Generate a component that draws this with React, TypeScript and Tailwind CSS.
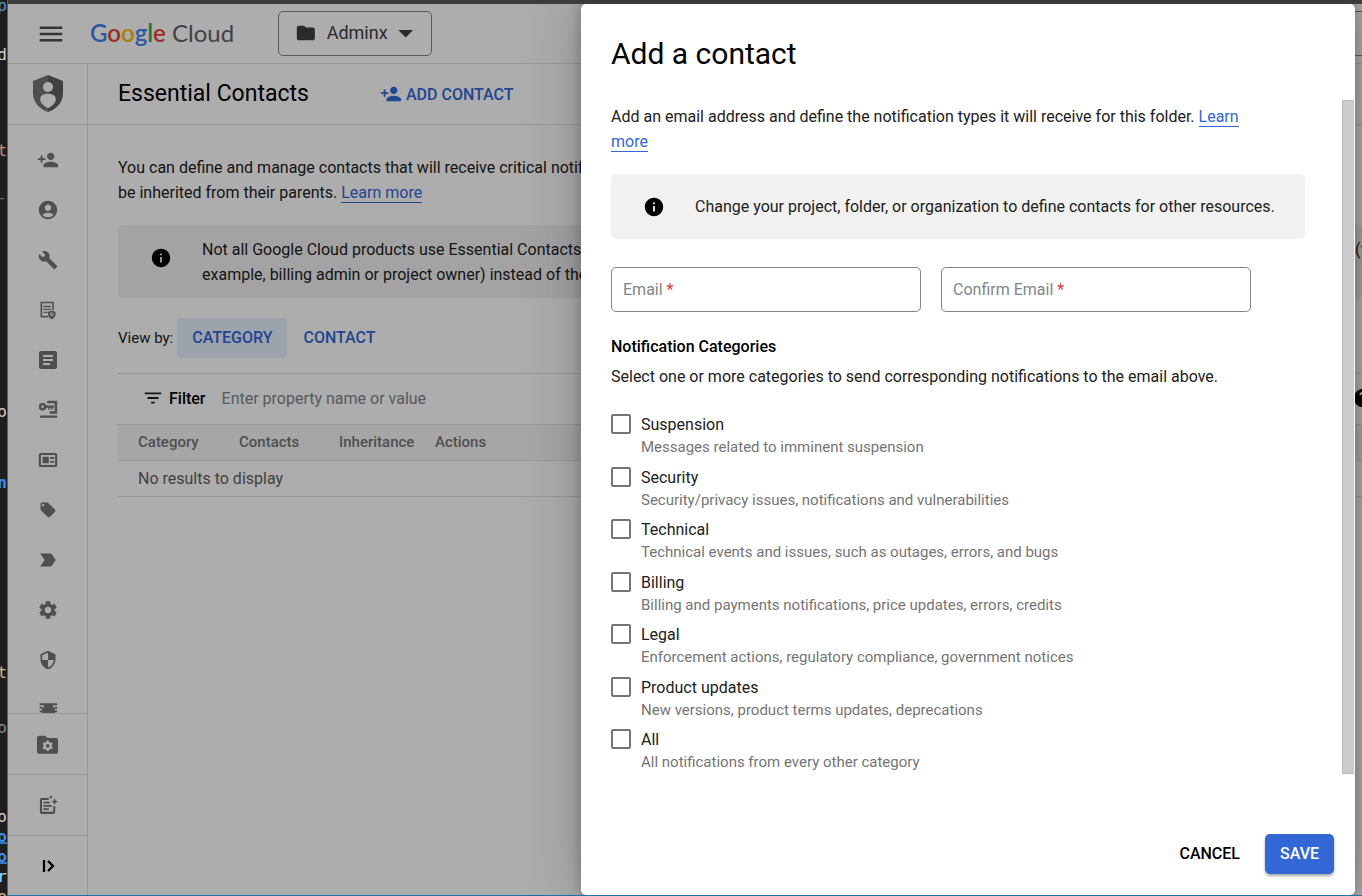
import type { ReactNode } from "react";
import {
  MdAccountCircle,
  MdArrowDropDown,
  MdArticle,
  MdBuild,
  MdFilterList,
  MdFolder,
  MdHelp,
  MdInfo,
  MdLabelImportant,
  MdLocalOffer,
  MdMenu,
  MdPersonAdd,
  MdSecurity,
  MdSettings,
} from "react-icons/md";

const svgProps = { viewBox: "0 0 24 24", fill: "currentColor", "aria-hidden": true } as const;

const ShieldPerson = () => (
  <svg viewBox="0 0 30 37" className="h-[37px] w-[30px]" aria-hidden="true">
    <path d="M15 0 0 6v12.500C0 27 6 34 15 37z" fill="#757575" />
    <path d="M15 0l15 6v12.500C30 27 24 34 15 37z" fill="#616161" />
    <circle cx="15" cy="12" r="5" fill="#fff" />
    <path d="M15 18.800c-5 0-7.800 2.200-7.800 5.500 0 3.400 3.300 6.600 7.800 9 4.500-2.400 7.800-5.600 7.800-9 0-3.300-2.800-5.500-7.800-5.500z" fill="#fff" />
  </svg>
);

const AuditDoc = () => (
  <svg {...svgProps} className="size-5">
    <path d="M3 2h16v10h-2V4H5v15h7v2H3z" />
    <path d="M6.500 7h9v1.600h-9zM6.500 10.500h9v1.600h-9zM6.500 14h5v1.600h-5z" />
    <path d="M16.500 12.500 21 14.200v3.300c0 2.600-1.900 4.700-4.500 5.500-2.600-.8-4.500-2.900-4.500-5.500v-3.300zm0 2.500a2.200 2.200 0 1 0 0 4.400 2.200 2.200 0 0 0 0-4.400z" fillRule="evenodd" />
    <circle cx="16.500" cy="17.200" r="1.100" />
  </svg>
);

const KeyTable = () => (
  <svg {...svgProps} className="size-5">
    <path d="M11 1h12v15.500h-9v-3h6V4h-9z" />
    <path d="M5.500 3.500a4.500 4.500 0 1 1-.01 9 4.500 4.500 0 0 1 .01-9zm0 2.900a1.600 1.600 0 1 0 0 3.200 1.600 1.600 0 0 0 0-3.200z" fillRule="evenodd" />
    <path d="M9 6.700h10v2.600h-1.200v2.200h-2V9.300h-1.300v2.200h-2V9.300H9zM2.500 18.500H23v2.800H2.500z" />
  </svg>
);

const IdCard = () => (
  <svg {...svgProps} className="size-5">
    <path d="M3.500 3.500h17c1.400 0 2.500.9 2.500 2v13c0 1.100-1.100 2-2.500 2h-17c-1.400 0-2.500-.9-2.500-2v-13c0-1.100 1.100-2 2.500-2zM3.500 6v12h17V6z" fillRule="evenodd" />
    <path d="M5.500 8h7.500v8H5.500zM14.500 8.500h5v2.200h-5zM14.500 13.200h5v2.200h-5z" />
  </svg>
);

const QuotaStrip = () => (
  <svg {...svgProps} className="size-[22px]">
    <path d="M3 4.500h19v2.300H3zM3 8.500h3v2H3zM19 8.500h3v2h-3zM7.500 6.500h10v12h-10zM3 12.500h3v2H3zM19 12.500h3v2h-3zM3 18h19v2.300H3z" />
    <path d="M5.500 9.500h14v6h-14z" />
  </svg>
);

const FolderGear = () => (
  <svg {...svgProps} className="size-[21px]">
    <path
      fillRule="evenodd"
      d="M2 2h7.500l2.500 2.500h10a2 2 0 0 1 2 2V20.500a2 2 0 0 1-2 2H2a2 2 0 0 1-2-2V4a2 2 0 0 1 2-2zM11 7.500l-.4 1.700-1.300.7-1.700-.6-1.300 2.200 1.300 1.200v1.500l-1.300 1.200 1.300 2.200 1.700-.5 1.300.7.400 1.700h2.400l.4-1.700 1.300-.7 1.700.5 1.300-2.200-1.300-1.200v-1.500l1.300-1.200-1.300-2.200-1.700.6-1.300-.7-.4-1.700zm1.200 3.900a2.100 2.100 0 1 1 0 4.200 2.100 2.100 0 0 1 0-4.200z"
    />
  </svg>
);

const ReleaseNotes = () => (
  <svg {...svgProps} className="size-5">
    <path d="M4.500 3.500H13v2.400H4.800v14.300h13.400v-6.700h2.500v7a2.300 2.300 0 0 1-2.200 2.300h-14a2.300 2.300 0 0 1-2.200-2.300V5.800a2.300 2.300 0 0 1 2.200-2.300z" />
    <path d="M6.500 8H14v2.100H6.500zM6.500 12h10v2.100h-10zM6.500 16H13v2.100H6.500z" />
    <path d="m20 4 1.300 2.900L24 8l-2.700 1.100L20 12l-1.300-2.900L16 8l2.700-1.100zM15.500 0l.8 1.800 1.700.7-1.700.7-.8 1.800-.8-1.800-1.700-.7 1.700-.7z" />
  </svg>
);

const ExpandPanel = () => (
  <svg viewBox="0 0 14 14" className="size-[14px]" fill="none" stroke="#000" strokeWidth="2.300" aria-hidden="true">
    <path d="M3 1v12M7 2l5 5-5 5" />
  </svg>
);

const navItems: { label: string; icon: ReactNode }[] = [
  { label: "IAM", icon: <MdPersonAdd className="size-[22px]" /> },
  { label: "Identity", icon: <MdAccountCircle className="size-[22px]" /> },
  { label: "Troubleshooter", icon: <MdBuild className="size-5" /> },
  { label: "Policies", icon: <AuditDoc /> },
  { label: "Organization policies", icon: <MdArticle className="size-6" /> },
  { label: "Service accounts", icon: <KeyTable /> },
  { label: "Identity federation", icon: <IdCard /> },
  { label: "Labels", icon: <MdLocalOffer className="size-[18px]" /> },
  { label: "Tags", icon: <MdLabelImportant className="size-[22px]" /> },
  { label: "Settings", icon: <MdSettings className="size-[22px]" /> },
  { label: "Privacy and security", icon: <MdSecurity className="size-5" /> },
  { label: "Quotas", icon: <QuotaStrip /> },
];

const footItems: { label: string; icon: ReactNode }[] = [
  { label: "Manage resources", icon: <FolderGear /> },
  { label: "Release notes", icon: <ReleaseNotes /> },
  { label: "Expand menu", icon: <ExpandPanel /> },
];

const categories = [
  ["Suspension", "Messages related to imminent suspension"],
  ["Security", "Security/privacy issues, notifications and vulnerabilities"],
  ["Technical", "Technical events and issues, such as outages, errors, and bugs"],
  ["Billing", "Billing and payments notifications, price updates, errors, credits"],
  ["Legal", "Enforcement actions, regulatory compliance, government notices"],
  ["Product updates", "New versions, product terms updates, deprecations"],
  ["All", "All notifications from every other category"],
];

const editorLines: { text: string; className: string }[] = [
  { text: "p", className: "-mt-1 text-[#569cd6]" },
  { text: "d", className: "mt-[29px] text-[#d4d4d4]" },
  { text: "t", className: "mt-[76px] text-[#ce9178]" },
  { text: "-", className: "mt-[27px] text-[#6a6a6a]" },
  { text: "o", className: "mt-[194px] text-[#d4d4d4]" },
  { text: "n", className: "mt-[51px] font-bold text-[#3b8eea]" },
  { text: "t", className: "mt-[170px] text-[#d7ba7d]" },
  { text: "o", className: "mt-[35px] text-[#8a8a8a]" },
  { text: "o", className: "mt-[69px] text-[#d4d4d4]" },
  { text: "o", className: "font-bold text-[#3b8eea] underline decoration-dashed" },
  { text: "o", className: "font-bold text-[#3b8eea] underline decoration-dashed" },
  { text: "r", className: "text-[#9cdcfe]" },
  { text: "e", className: "text-[#d7ba7d]" },
];

const linkClass = "border-b border-current text-[#3367d6]";

function EditorEdge() {
  return (
    <div className="flex w-[7px] shrink-0 flex-col items-end overflow-hidden bg-[#1e1e1e] font-['DejaVu_Sans_Mono',monospace] text-base leading-5">
      {editorLines.map((line, i) => (
        <span key={i} className={line.className}>
          {line.text}
        </span>
      ))}
    </div>
  );
}

function TopBar() {
  return (
    <header className="flex h-[60px] shrink-0 items-center border-b border-[#e0e0e0]">
      <button aria-label="Main menu" className="ml-7 text-[#4d4d4d]">
        <MdMenu className="size-[30px]" />
      </button>
      <div className="ml-6 w-[188px] pb-0.5 font-[Lato,sans-serif] text-2xl whitespace-nowrap text-[#5f6368]">
        <span className="font-semibold">
          <span className="text-[#4285f4]">G</span>
          <span className="text-[#ea4335]">o</span>
          <span className="text-[#fbbc04]">o</span>
          <span className="text-[#4285f4]">g</span>
          <span className="text-[#34a853]">l</span>
          <span className="text-[#ea4335]">e</span>
        </span>{" "}
        Cloud
      </div>
      <button className="flex h-[45px] w-[154px] shrink-0 items-center rounded-[5px] border border-[#80868b] px-4 pb-0.5 text-lg text-[#3c4043]">
        <MdFolder className="size-[22px]" />
        <span className="ml-2.5">Adminx</span>
        <MdArrowDropDown className="-mr-2 ml-auto size-9" />
      </button>
      <div className="-mr-4 ml-[200px] h-[45px] flex-1 rounded-[5px] border border-[#80868b]" />
    </header>
  );
}

function SideNav() {
  return (
    <nav className="flex w-20 shrink-0 flex-col border-r border-[#e0e0e0] text-[#757575]">
      <div className="flex h-[61px] shrink-0 items-center justify-center border-b border-[#e0e0e0] pb-0.5">
        <ShieldPerson />
      </div>
      <div className="min-h-0 flex-1 overflow-hidden pt-2.5">
        {navItems.map((item) => (
          <a key={item.label} href="#" aria-label={item.label} className="flex h-[50px] items-center justify-center">
            {item.icon}
          </a>
        ))}
      </div>
      {footItems.map((item) => (
        <button
          key={item.label}
          aria-label={item.label}
          className="flex h-[61px] shrink-0 items-center justify-center border-t border-[#e0e0e0] last:h-[60px]"
        >
          {item.icon}
        </button>
      ))}
    </nav>
  );
}

function ContactsPage() {
  return (
    <main className="min-w-0 flex-1 overflow-hidden text-base leading-[25px]">
      <div className="flex h-[61px] items-center border-b border-[#e0e0e0] pl-[30px]">
        <h1 className="w-[262px] pb-0.5 text-[23px] text-black">Essential Contacts</h1>
        <button className="flex items-center gap-1 font-medium text-[#3367d6]">
          <MdPersonAdd className="size-[22px]" />
          ADD CONTACT
        </button>
      </div>
      <div className="pt-[30px] pl-[30px]">
        <p className="whitespace-nowrap">
          You can define and manage contacts that will receive critical notifications.
          <br />
          be inherited from their parents.{" "}
          <a href="#" className={linkClass}>
            Learn more
          </a>
        </p>
        <div className="mt-5 flex rounded-[5px] bg-[#f1f1f1] pt-3 pb-[11px] whitespace-nowrap">
          <MdInfo className="mt-2.5 ml-8 size-[22px] shrink-0 text-black" />
          <p className="ml-[30px] flex-1">
            <span className="-mr-1 flex justify-between">
              <span>Not all Google Cloud products use Essential Contacts</span>
              <span>(f</span>
            </span>
            example, billing admin or project owner) instead of the
          </p>
        </div>
        <div className="mt-5 flex items-center gap-1">
          <span className="text-[15px]">View by:</span>
          <button className="h-10 rounded-xs bg-[#e8f0fe] px-[15px] pb-0.5 font-medium text-[#3367d6]">CATEGORY</button>
          <button className="h-10 px-3 pb-0.5 font-medium text-[#3367d6]">CONTACT</button>
        </div>
        <div className="mt-[15px] flex h-[51px] items-center border-t border-[#e0e0e0] pb-0.5 pl-6">
          <MdFilterList className="size-[22px] text-[#202124]" />
          <label htmlFor="filter" className="ml-[5px] font-medium text-black">
            Filter
          </label>
          <input
            id="filter"
            placeholder="Enter property name or value"
            className="ml-4 w-80 bg-transparent outline-none placeholder:text-[#80868b]"
          />
          <MdHelp className="-mr-3 ml-auto size-[22px] text-black" />
        </div>
        <table className="w-full table-fixed text-left">
          <thead className="border-y border-[#e0e0e0] bg-[#f5f5f5] text-[15px] text-[#757575]">
            <tr className="h-9">
              <th className="w-[121px] pl-5 font-medium">Category</th>
              <th className="w-[100px] font-medium">Contacts</th>
              <th className="w-24 font-medium">Inheritance</th>
              <th className="font-medium">Actions</th>
            </tr>
          </thead>
          <tbody>
            <tr className="h-9 border-b border-[#e0e0e0] text-[#616161]">
              <td colSpan={4} className="pl-5">
                No results to display
              </td>
            </tr>
          </tbody>
        </table>
      </div>
    </main>
  );
}

function EmailField({ id, label }: { id: string; label: string }) {
  return (
    <div className="relative w-[310px]">
      <input
        id={id}
        type="email"
        required
        placeholder=" "
        className="peer h-[45px] w-full rounded-[5px] border border-[#80868b] px-3 outline-none"
      />
      <label
        htmlFor={id}
        className="pointer-events-none absolute inset-y-0 left-3 flex items-center gap-1 text-[#80868b] peer-[:not(:placeholder-shown)]:hidden"
      >
        {label} <span className="text-[#e53935]">*</span>
      </label>
    </div>
  );
}

function AddContactPanel() {
  return (
    <aside
      role="dialog"
      aria-labelledby="panel-title"
      className="absolute top-0 right-[7px] bottom-0 flex w-[774px] flex-col rounded-[5px] bg-white text-base leading-[25px] text-[#212121] shadow-[0_0_12px_2px_rgba(0,0,0,0.2),0_0_60px_4px_rgba(0,0,0,0.2)]"
    >
      <h2 id="panel-title" className="flex h-24 shrink-0 items-center pt-0.5 pl-[30px] text-[30px] text-black">
        Add a contact
      </h2>
      <div className="flex min-h-0 flex-1 pr-px">
        <div className="min-w-0 flex-1 overflow-hidden pt-1 pr-[37px] pl-[30px]">
          <p className="pr-10">
            Add an email address and define the notification types it will receive for this folder.{" "}
            <a href="#" className={linkClass}>
              Learn more
            </a>
          </p>
          <div className="mt-5 flex items-center rounded-[5px] bg-[#f1f1f1] py-5">
            <MdInfo className="ml-8 size-[22px] shrink-0 text-black" />
            <p className="ml-[30px]">Change your project, folder, or organization to define contacts for other resources.</p>
          </div>
          <div className="mt-7 flex gap-5">
            <EmailField id="email" label="Email" />
            <EmailField id="confirm-email" label="Confirm Email" />
          </div>
          <h3 className="mt-[22px] font-medium text-black">Notification Categories</h3>
          <p className="mt-[5px]">Select one or more categories to send corresponding notifications to the email above.</p>
          <div className="mt-6 grid h-[368px] grid-rows-7">
            {categories.map(([name, detail], i) => (
              <div key={name} className="flex gap-2.5">
                <input
                  id={`category-${i}`}
                  type="checkbox"
                  className="mt-px size-5 appearance-none rounded-xs border-2 border-[#757575] checked:bg-[#3367d6]"
                />
                <label htmlFor={`category-${i}`}>
                  <span className="block leading-6">{name}</span>
                  <span className="block text-[15px] leading-5 text-[#757575]">{detail}</span>
                </label>
              </div>
            ))}
          </div>
        </div>
        <div className="w-3 border border-r-0 border-[#bababa] bg-[#cbcbcb]" />
      </div>
      <div className="flex h-[121px] shrink-0 items-end justify-end gap-2.5 pr-[21px] pb-[21px] font-medium">
        <button className="h-10 px-[15px] pb-0.5 text-black">CANCEL</button>
        <button className="h-10 rounded-[5px] bg-[#3367d6] px-[15px] pb-0.5 text-white shadow-[0_2px_3px_rgba(0,0,0,0.35)]">
          SAVE
        </button>
      </div>
    </aside>
  );
}

export default function App() {
  return (
    <div className="flex h-screen overflow-hidden bg-[#1e1e1e] font-[Roboto,sans-serif]">
      <EditorEdge />
      <div className="flex min-w-0 flex-1 flex-col border-b border-l border-[#1f6fa8] bg-[#3c3c3c] pt-1">
        <div className="relative flex min-h-0 flex-1 flex-col overflow-hidden bg-white text-[#212121]">
          <TopBar />
          <div className="flex min-h-0 flex-1">
            <SideNav />
            <ContactsPage />
          </div>
          <div className="absolute inset-0 bg-black/32" />
          <AddContactPanel />
        </div>
      </div>
    </div>
  );
}
